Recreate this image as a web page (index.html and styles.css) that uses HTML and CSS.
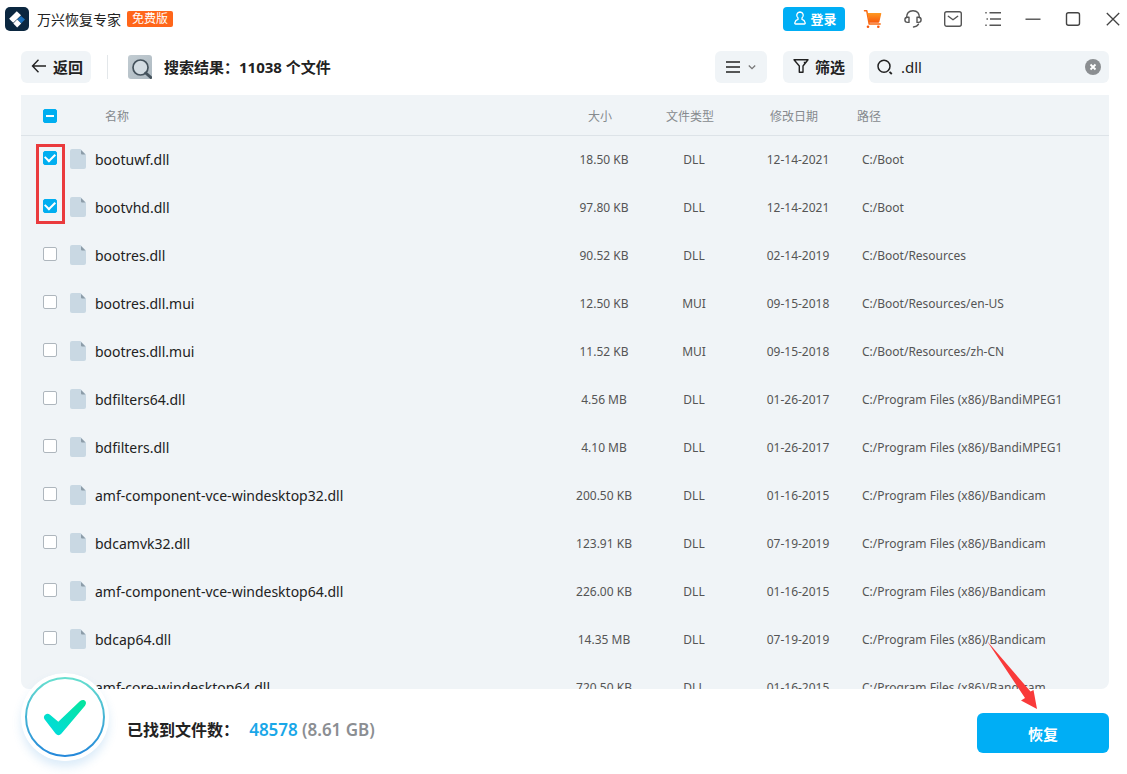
FILE: index.html
```html
<!DOCTYPE html>
<html lang="zh-CN">
<head>
<meta charset="utf-8">
<meta name="viewport" content="width=device-width, initial-scale=1">
<title>万兴恢复专家</title>
<link rel="stylesheet" href="styles.css">
</head>
<body>
<svg class="sprite" aria-hidden="true">
  <symbol id="file" viewBox="0 0 16 20">
    <path d="M2 0H10.500L16 5.500V18a2 2 0 0 1-2 2H2a2 2 0 0 1-2-2V2a2 2 0 0 1 2-2z" fill="#c9d8e3"/>
    <path d="M11 1l4.500 4.500H12a1 1 0 0 1-1-1z" fill="#8c9ca8"/>
  </symbol>
</svg>

<header class="titlebar">
  <svg class="logo" viewBox="0 0 24 24" aria-hidden="true">
    <rect width="24" height="24" rx="5" fill="#0b2740"/>
    <path d="M11.800 4.200L16 8.200 8.200 15.800 4.100 11.700z" fill="#fff"/>
    <path d="M16 8.900l4 3.600-3.700 3.700-4-3.800z" fill="#1c6fb8"/>
    <path d="M12.200 12.600l4 3.900-4 3.900-3.900-3.900z" fill="#fff"/>
  </svg>
  <h1 class="app-name">万兴恢复专家</h1>
  <span class="edition">免费版</span>
  <div class="window-tools">
    <button class="login" type="button">
      <svg viewBox="0 0 14 14" aria-hidden="true"><path d="M7 1a3.300 3.300 0 0 1 2 5.900v1.400c1.600.4 2.800 1.700 3.200 3.500q.2 1.200-.9 1.200H2.700q-1.100 0-.9-1.200C2.200 10 3.400 8.700 5 8.300V6.900A3.300 3.300 0 0 1 7 1z" fill="none" stroke="#fff" stroke-width="1.300"/></svg>
      登录
    </button>
    <button class="tool" type="button" aria-label="购物车">
      <svg viewBox="0 0 20 20" aria-hidden="true">
        <defs><linearGradient id="cart" x1="0" y1="0" x2="0" y2="1"><stop offset="0" stop-color="#ff9a22"/><stop offset="1" stop-color="#f7580d"/></linearGradient></defs>
        <path d="M1.500 1.800h2.300l2.400 13.300h11" fill="none" stroke="#f96a12" stroke-width="1.500" stroke-linecap="round" stroke-linejoin="round"/>
        <path d="M4.400 4h13.300q.8 0 .6.800l-2 8.200q-.2.800-1 .8H6.200z" fill="url(#cart)"/>
        <circle cx="5" cy="17.800" r="1.300" fill="#f7580d"/><circle cx="15.300" cy="17.800" r="1.300" fill="#f7580d"/>
      </svg>
    </button>
    <button class="tool" type="button" aria-label="客服">
      <svg viewBox="0 0 20 20" aria-hidden="true"><g fill="none" stroke="#555" stroke-width="1.400" stroke-linecap="round"><path d="M3.600 8.600C3.600 4 6.400 1.700 10 1.700s6.400 2.300 6.400 6.900"/><path d="M6 8.200v5.200H4.500a2.600 2.600 0 0 1 0-5.200zM14 8.200v5.200h1.500a2.600 2.600 0 0 0 0-5.200z" stroke-linejoin="round"/><path d="M15.500 15.200q-1.500 2.600-5 2.800"/></g></svg>
    </button>
    <button class="tool" type="button" aria-label="邮件">
      <svg viewBox="0 0 20 20" aria-hidden="true"><g fill="none" stroke="#555" stroke-width="1.400" stroke-linecap="round" stroke-linejoin="round"><rect x="1.700" y="2.700" width="16.600" height="14.600" rx="2"/><path d="M5.300 7.300L10 10.800l4.700-3.500"/></g></svg>
    </button>
    <button class="tool" type="button" aria-label="菜单">
      <svg viewBox="0 0 20 20" aria-hidden="true"><path d="M2.300 3.700h1.400M6.500 3.700h11.500M3.500 10h1.400M7 10h11M2.300 16.300h1.400M6.500 16.300h11.500" fill="none" stroke="#555" stroke-width="1.400"/></svg>
    </button>
    <button class="tool" type="button" aria-label="最小化">
      <svg viewBox="0 0 20 20" aria-hidden="true"><path d="M2.500 10.200h15" fill="none" stroke="#444" stroke-width="1.300"/></svg>
    </button>
    <button class="tool" type="button" aria-label="最大化">
      <svg viewBox="0 0 20 20" aria-hidden="true"><rect x="3.500" y="3.700" width="13" height="12.600" rx="2" fill="none" stroke="#444" stroke-width="1.400"/></svg>
    </button>
    <button class="tool" type="button" aria-label="关闭">
      <svg viewBox="0 0 20 20" aria-hidden="true"><path d="M3.800 4l12.400 12.200M16.200 4L3.800 16.200" fill="none" stroke="#444" stroke-width="1.300"/></svg>
    </button>
  </div>
</header>

<main class="content">
  <div class="toolbar">
    <button class="back" type="button">
      <svg viewBox="0 0 16 16" aria-hidden="true"><path d="M7.500 1.800L1.500 8l6 6.200M1.500 8h13.500" fill="none" stroke="#222" stroke-width="1.400"/></svg>
      返回
    </button>
    <span class="divider"></span>
    <svg class="result-icon" viewBox="0 0 24 24" aria-hidden="true">
      <defs><linearGradient id="tile" x1="0" y1="0" x2="1" y2="1"><stop offset="0" stop-color="#c2ccd2"/><stop offset="1" stop-color="#adb9c1"/></linearGradient></defs>
      <rect width="24" height="24" rx="3" fill="url(#tile)"/>
      <circle cx="12.500" cy="12.500" r="7.500" fill="#d3dce2" stroke="#44525c" stroke-width="1.700"/>
      <path d="M17.800 18l5 4.500" stroke="#44525c" stroke-width="3" stroke-linecap="round"/>
    </svg>
    <h2 class="result-title">搜索结果：11038 个文件</h2>
    <button class="view" type="button" aria-label="视图">
      <svg class="lines" viewBox="0 0 14 14" aria-hidden="true"><path d="M0 2h14M0 7h14M0 12h14" stroke="#222" stroke-width="1.400"/></svg>
      <svg class="caret" viewBox="0 0 8 8" aria-hidden="true"><path d="M.800 2.500L4 5.700l3.200-3.200" fill="none" stroke="#777" stroke-width="1.300"/></svg>
    </button>
    <button class="filter" type="button">
      <svg viewBox="0 0 16 16" aria-hidden="true"><path d="M1 1.700h14L10 8v6.300H6.300V8zM10.800 4.500H13" fill="none" stroke="#222" stroke-width="1.400" stroke-linejoin="round"/></svg>
      筛选
    </button>
    <div class="search">
      <svg class="search-icon" viewBox="0 0 16 16" aria-hidden="true"><circle cx="7" cy="7.300" r="6" fill="none" stroke="#222" stroke-width="1.500"/><path d="M12.500 12.800l2.300 2.200" stroke="#222" stroke-width="1.800"/></svg>
      <input class="search-box" type="text" value=".dll" aria-label="搜索">
      <button class="clear" type="button" aria-label="清除">
        <svg viewBox="0 0 16 16" aria-hidden="true"><circle cx="8" cy="8" r="8" fill="#8b8e91"/><path d="M5.500 5.500l5 5M10.500 5.500l-5 5" stroke="#fff" stroke-width="1.800"/></svg>
      </button>
    </div>
  </div>

  <section class="panel">
    <table class="files">
      <colgroup><col class="col-check"><col><col class="col-size"><col class="col-type"><col class="col-date"><col class="col-path"></colgroup>
      <thead>
        <tr><th class="pick"><input class="box partial" type="checkbox" aria-label="全选"></th><th class="name">名称</th><th>大小</th><th>文件类型</th><th>修改日期</th><th class="path">路径</th></tr>
      </thead>
      <tbody>
        <tr><td class="pick"><input class="box" type="checkbox" aria-label="bootuwf.dll" checked></td><td class="name"><span class="file"><svg><use href="#file"/></svg>bootuwf.dll</span></td><td>18.50 KB</td><td>DLL</td><td>12-14-2021</td><td class="path">C:/Boot</td></tr>
        <tr><td class="pick"><input class="box" type="checkbox" aria-label="bootvhd.dll" checked></td><td class="name"><span class="file"><svg><use href="#file"/></svg>bootvhd.dll</span></td><td>97.80 KB</td><td>DLL</td><td>12-14-2021</td><td class="path">C:/Boot</td></tr>
        <tr><td class="pick"><input class="box" type="checkbox" aria-label="bootres.dll"></td><td class="name"><span class="file"><svg><use href="#file"/></svg>bootres.dll</span></td><td>90.52 KB</td><td>DLL</td><td>02-14-2019</td><td class="path">C:/Boot/Resources</td></tr>
        <tr><td class="pick"><input class="box" type="checkbox" aria-label="bootres.dll.mui"></td><td class="name"><span class="file"><svg><use href="#file"/></svg>bootres.dll.mui</span></td><td>12.50 KB</td><td>MUI</td><td>09-15-2018</td><td class="path">C:/Boot/Resources/en-US</td></tr>
        <tr><td class="pick"><input class="box" type="checkbox" aria-label="bootres.dll.mui"></td><td class="name"><span class="file"><svg><use href="#file"/></svg>bootres.dll.mui</span></td><td>11.52 KB</td><td>MUI</td><td>09-15-2018</td><td class="path">C:/Boot/Resources/zh-CN</td></tr>
        <tr><td class="pick"><input class="box" type="checkbox" aria-label="bdfilters64.dll"></td><td class="name"><span class="file"><svg><use href="#file"/></svg>bdfilters64.dll</span></td><td>4.56 MB</td><td>DLL</td><td>01-26-2017</td><td class="path">C:/Program Files (x86)/BandiMPEG1</td></tr>
        <tr><td class="pick"><input class="box" type="checkbox" aria-label="bdfilters.dll"></td><td class="name"><span class="file"><svg><use href="#file"/></svg>bdfilters.dll</span></td><td>4.10 MB</td><td>DLL</td><td>01-26-2017</td><td class="path">C:/Program Files (x86)/BandiMPEG1</td></tr>
        <tr><td class="pick"><input class="box" type="checkbox" aria-label="amf-component-vce-windesktop32.dll"></td><td class="name"><span class="file"><svg><use href="#file"/></svg>amf-component-vce-windesktop32.dll</span></td><td>200.50 KB</td><td>DLL</td><td>01-16-2015</td><td class="path">C:/Program Files (x86)/Bandicam</td></tr>
        <tr><td class="pick"><input class="box" type="checkbox" aria-label="bdcamvk32.dll"></td><td class="name"><span class="file"><svg><use href="#file"/></svg>bdcamvk32.dll</span></td><td>123.91 KB</td><td>DLL</td><td>07-19-2019</td><td class="path">C:/Program Files (x86)/Bandicam</td></tr>
        <tr><td class="pick"><input class="box" type="checkbox" aria-label="amf-component-vce-windesktop64.dll"></td><td class="name"><span class="file"><svg><use href="#file"/></svg>amf-component-vce-windesktop64.dll</span></td><td>226.00 KB</td><td>DLL</td><td>01-16-2015</td><td class="path">C:/Program Files (x86)/Bandicam</td></tr>
        <tr><td class="pick"><input class="box" type="checkbox" aria-label="bdcap64.dll"></td><td class="name"><span class="file"><svg><use href="#file"/></svg>bdcap64.dll</span></td><td>14.35 MB</td><td>DLL</td><td>07-19-2019</td><td class="path">C:/Program Files (x86)/Bandicam</td></tr>
        <tr><td class="pick"><input class="box" type="checkbox" aria-label="amf-core-windesktop64.dll"></td><td class="name"><span class="file"><svg><use href="#file"/></svg>amf-core-windesktop64.dll</span></td><td>720.50 KB</td><td>DLL</td><td>01-16-2015</td><td class="path">C:/Program Files (x86)/Bandicam</td></tr>
      </tbody>
    </table>
    <span class="mark-box"></span>
  </section>
</main>

<footer class="status">
  <svg class="done" viewBox="0 0 88 88" aria-hidden="true">
    <defs>
      <linearGradient id="ring" x1="0" y1="0" x2="0" y2="1"><stop offset="0" stop-color="#67dfcf"/><stop offset="1" stop-color="#2488da"/></linearGradient>
      <linearGradient id="tick" x1="1" y1="0" x2="0" y2="1"><stop offset="0" stop-color="#06e59b"/><stop offset="1" stop-color="#00dbe3"/></linearGradient>
    </defs>
    <circle cx="44" cy="44" r="44" fill="#fff"/>
    <circle cx="44" cy="44" r="39" fill="none" stroke="url(#ring)" stroke-width="2"/>
    <path d="M23.700 46.500a3.600 3.600 0 0 1 5.300-4.800l8.300 7 21.500-20.400c3.600-3.200 8.300 0 5.200 4.400L40.500 60.500q-3 3.300-6 0z" fill="url(#tick)"/>
  </svg>
  <p class="found">已找到文件数： <strong class="count">48578</strong> <span class="total">(8.61 GB)</span></p>
  <div class="action">
    <button class="recover" type="button">恢复</button>
    <svg class="mark-arrow" viewBox="0 0 52 68" aria-hidden="true"><path d="M0 0L43.500 50.500 46.500 49 50 68 34 59.500 38 57z" fill="#f93a3a"/></svg>
  </div>
</footer>
</body>
</html>
```
FILE: styles.css
```css
* {
  box-sizing: border-box;
}

body {
  display: flex;
  flex-direction: column;
  height: 100vh;
  margin: 0;
  overflow: hidden;
  background: #fff;
  color: #222;
  font-family: "Noto Sans", "Noto Sans CJK SC", sans-serif;
  font-size: 14px;
}

button,
input {
  margin: 0;
  padding: 0;
  border: 0;
  background: none;
  color: inherit;
  font: inherit;
}

h1,
h2,
p {
  margin: 0;
}

svg {
  display: block;
  flex: none;
}

.sprite {
  position: absolute;
  width: 0;
  height: 0;
}

.titlebar {
  display: flex;
  align-items: center;
  flex: none;
  height: 38px;
  padding: 0 4px 0 5px;
}

.logo {
  width: 24px;
  height: 24px;
}

.app-name {
  margin-left: 8px;
  font-size: 14px;
  font-weight: 400;
}

.edition {
  margin-left: 6px;
  padding: 0 5px;
  border-radius: 2px;
  background: #ff661a;
  color: #fff;
  font-size: 12px;
  line-height: 16px;
}

.window-tools {
  display: flex;
  align-items: center;
  gap: 20px;
  margin-left: auto;
}

.login {
  display: flex;
  align-items: center;
  justify-content: center;
  gap: 3px;
  width: 62px;
  height: 24px;
  margin-right: -2px;
  padding: 0 0 2px 2px;
  border-radius: 4px;
  background: #00aef5;
  color: #fff;
  font-size: 13px;
  font-weight: 700;
}

.login svg {
  width: 14px;
  height: 14px;
}

.tool svg {
  width: 20px;
  height: 20px;
}

.content {
  display: flex;
  flex: 1;
  flex-direction: column;
  min-height: 0;
  padding: 13px 18px 0 21px;
}

.toolbar {
  display: flex;
  align-items: center;
  flex: none;
  height: 32px;
  margin-bottom: 12px;
}

.back,
.view,
.filter,
.search {
  display: flex;
  align-items: center;
  justify-content: center;
  height: 32px;
  border-radius: 6px;
  background: #f0f4f7;
}

.back,
.filter {
  gap: 6px;
  width: 70px;
  padding: 0 0 2px 2px;
  font-size: 15px;
  font-weight: 700;
}

.back svg,
.filter svg,
.search-icon,
.clear svg {
  width: 16px;
  height: 16px;
}

.divider {
  width: 1px;
  height: 24px;
  margin: 0 20px 0 16px;
  background: #e3e7ea;
}

.result-icon {
  width: 24px;
  height: 24px;
}

.result-title {
  margin-left: 12px;
  padding-bottom: 2px;
  font-size: 15px;
  font-weight: 700;
}

.view {
  gap: 8px;
  width: 52px;
  margin: 0 16px 0 auto;
}

.lines {
  width: 14px;
  height: 14px;
}

.caret {
  width: 8px;
  height: 8px;
}

.search {
  width: 240px;
  margin-left: 16px;
  padding: 0 8px;
}

.search-box {
  flex: 1;
  min-width: 0;
  margin-left: 8px;
  outline: 0;
  font-size: 15px;
}

.panel {
  position: relative;
  flex: 1;
  min-height: 0;
  overflow: hidden;
  border-radius: 0 0 8px 8px;
  background: #f0f4f7;
}

.files {
  width: 100%;
  border-collapse: separate;
  border-spacing: 0;
  table-layout: fixed;
  color: #555;
  font-size: 12px;
}

.col-check {
  width: 49px;
}

.col-size,
.col-type {
  width: 90px;
}

.col-date {
  width: 118px;
}

.col-path {
  width: 252px;
}

.files th {
  height: 41px;
  padding: 2px 8px 0 0;
  border-bottom: 1px solid #dde3e8;
  color: #868a8e;
  font-weight: 400;
}

.files td {
  height: 48px;
  padding: 0 0 2px;
  text-align: center;
  white-space: nowrap;
}

.files .pick {
  padding: 0 0 4px 22px;
  text-align: left;
}

.files th.pick {
  padding: 2px 0 0 22px;
}

.files .name,
.files .path {
  text-align: left;
}

.files th.name {
  padding-left: 35px;
}

.files td.path {
  padding-left: 5px;
}

.file {
  display: flex;
  align-items: center;
  gap: 9px;
  color: #222;
  font-size: 14px;
}

.file svg {
  width: 16px;
  height: 20px;
}

.box {
  display: block;
  width: 14px;
  height: 14px;
  border: 1px solid #aeb6bd;
  border-radius: 2px;
  appearance: none;
  background: #fff;
}

.box:checked,
.box.partial {
  display: grid;
  place-items: center;
  border-color: #00aef0;
  background: #00aef0;
}

.box:checked::before {
  content: "";
  width: 8px;
  height: 5px;
  margin-bottom: 3px;
  border: solid #fff;
  border-width: 0 0 2px 2px;
  transform: rotate(-45deg);
}

.box.partial::before {
  content: "";
  width: 8px;
  height: 2px;
  background: #fff;
}

.mark-box {
  position: absolute;
  top: 49px;
  left: 15px;
  width: 29px;
  height: 80px;
  border: 3px solid #ea3a3d;
}

.status {
  position: relative;
  display: flex;
  align-items: center;
  flex: none;
  height: 85px;
  padding: 3px 18px 0 127px;
}

.done {
  position: absolute;
  top: -16px;
  left: 21px;
  width: 88px;
  height: 88px;
  border-radius: 50%;
  box-shadow: 0 6px 10px rgba(60, 150, 220, 0.18);
}

.found {
  padding-bottom: 8px;
  font-size: 16px;
  font-weight: 600;
}

.count,
.total {
  font-size: 17px;
  font-weight: 600;
}

.count {
  margin-left: 6px;
  color: #1aa7e8;
}

.total {
  color: #8b8e92;
}

.action {
  position: relative;
  margin-left: auto;
}

.recover {
  display: block;
  width: 132px;
  height: 40px;
  border-radius: 6px;
  background: #00aef5;
  color: #fff;
  font-size: 15px;
  font-weight: 700;
}

.mark-arrow {
  position: absolute;
  right: 70px;
  bottom: 44px;
  width: 52px;
  height: 68px;
}
```
